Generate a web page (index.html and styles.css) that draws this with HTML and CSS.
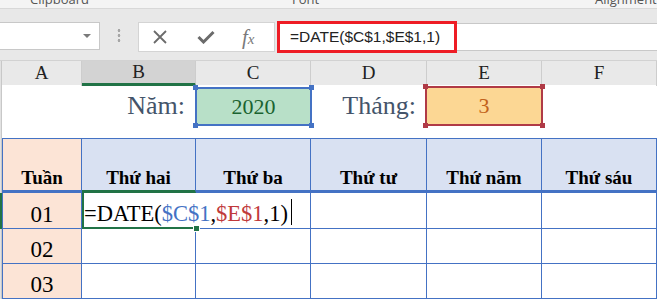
FILE: index.html
```html
<!DOCTYPE html>
<html lang="vi">
<head>
    <meta charset="UTF-8">
    <title>DATE</title>
    <link rel="stylesheet" href="styles.css">
</head>
<body>
    <div class="ribbon">
        <span class="rlabel">Clipboard</span>
        <span class="rlabel">Font</span>
        <span class="rlabel">Alignment</span>
    </div>

    <div class="fbar">
        <div class="namebox"><span class="caret"></span></div>
        <div class="grip"></div>
        <div class="fbtns">
            <svg class="ico-x" width="14" height="14" viewBox="0 0 14 14">
                <path d="M1 1L13 13M13 1L1 13" stroke="#6b6b6b" stroke-width="1.8" fill="none"/>
            </svg>
            <svg class="ico-ok" width="18" height="14" viewBox="0 0 18 14">
                <path d="M1.5 7L6.5 12L16.5 2" stroke="#6b6b6b" stroke-width="3" fill="none"/>
            </svg>
            <span class="ico-fx">f<small>x</small></span>
        </div>
        <div class="finput">
            <span class="fhl">=DATE($C$1,$E$1,1)</span>
        </div>
    </div>

    <div class="cols">
        <div class="ch gut"></div>
        <div class="ch">A</div>
        <div class="ch sel">B</div>
        <div class="ch">C</div>
        <div class="ch">D</div>
        <div class="ch">E</div>
        <div class="ch">F</div>
    </div>

    <div class="row r1">
        <div class="gut"></div>
        <div></div>
        <div class="lbl">Năm:</div>
        <div><div class="hl hl-c">2020<i class="tl"></i><i class="tr"></i><i class="bl"></i><i class="br"></i></div></div>
        <div class="lbl">Tháng:</div>
        <div><div class="hl hl-e">3<i class="tl"></i><i class="tr"></i><i class="bl"></i><i class="br"></i></div></div>
        <div></div>
    </div>

    <div class="row r2">
        <div class="gut"></div>
        <div class="th wk">Tuần</div>
        <div class="th sel">Thứ hai</div>
        <div class="th">Thứ ba</div>
        <div class="th">Thứ tư</div>
        <div class="th">Thứ năm</div>
        <div class="th">Thứ sáu</div>
    </div>

    <div class="row rd">
        <div class="gut on"></div>
        <div class="td wk">01</div>
        <div class="td edit">
            <span class="ftext">=DATE(<span class="ref-c">$C$1</span>,<span class="ref-e">$E$1</span>,1)<span class="cursor"></span></span>
            <span class="handle"></span>
        </div>
        <div class="td"></div>
        <div class="td"></div>
        <div class="td"></div>
        <div class="td"></div>
    </div>

    <div class="row rd">
        <div class="gut"></div>
        <div class="td wk">02</div>
        <div class="td"></div>
        <div class="td"></div>
        <div class="td"></div>
        <div class="td"></div>
        <div class="td"></div>
    </div>

    <div class="row rd">
        <div class="gut"></div>
        <div class="td wk">03</div>
        <div class="td"></div>
        <div class="td"></div>
        <div class="td"></div>
        <div class="td"></div>
        <div class="td"></div>
    </div>
</body>
</html>
```

FILE: styles.css
```css
body {
    margin: 0;
    width: 657px;
    height: 302px;
    overflow: hidden;
    background: #fff;
    font-family: "Liberation Serif", serif;
}

/* ribbon group labels, cut off at the top */
.ribbon {
    height: 8px;
    background: #f4f4f4;
    border-bottom: 1px solid #d8d8d8;
    overflow: hidden;
    display: grid;
    grid-template-columns: 30px 262px 303px auto;
    font-family: "Open Sans", sans-serif;
    font-size: 13px;
    line-height: 13px;
    color: #555;
}
.rlabel {
    margin-top: -7px;
}
.rlabel:nth-child(1) { grid-column: 2; }
.rlabel:nth-child(2) { grid-column: 3; }
.rlabel:nth-child(3) { grid-column: 4; }

/* formula bar */
.fbar {
    height: 52px;
    box-sizing: border-box;
    padding-top: 13px;
    background: #e8e8e8;
    border-bottom: 1px solid #d2d2d2;
    display: flex;
    align-items: flex-start;
}
.namebox {
    width: 100px;
    height: 28px;
    box-sizing: border-box;
    background: #fff;
    border: 1px solid #c8c8c8;
    border-left: none;
    display: flex;
    justify-content: flex-end;
    align-items: center;
    padding-right: 8px;
}
.caret {
    width: 0;
    height: 0;
    border-left: 4px solid transparent;
    border-right: 4px solid transparent;
    border-top: 4px solid #7a7a7a;
}
.grip {
    width: 4px;
    height: 15px;
    margin: 6px 0 0 17px;
    background: radial-gradient(circle, #a6a6a6 1.2px, transparent 1.6px) 0 0 / 4px 5px;
}
.fbtns {
    width: 137px;
    height: 30px;
    box-sizing: border-box;
    margin-left: 17px;
    background: #fff;
    border: 1px solid #d4d4d4;
    display: flex;
    align-items: center;
}
.ico-x { margin-left: 14px; }
.ico-ok { margin-left: 30px; }
.ico-fx {
    margin-left: 27px;
    font-family: "Liberation Serif", serif;
    font-style: italic;
    font-size: 21px;
    color: #7a7a7a;
}
.ico-fx small {
    font-size: 15px;
}
.finput {
    flex: 1;
    height: 28px;
    margin: 1px 0 0 2px;
    box-sizing: border-box;
    background: #fff;
    border-top: 1px solid #c8c8c8;
    border-bottom: 1px solid #c8c8c8;
    display: flex;
    align-items: center;
}
.fhl {
    width: 180px;
    height: 32px;
    flex-shrink: 0;
    box-sizing: border-box;
    border: 3px solid #ee1c25;
    padding-left: 10px;
    display: flex;
    align-items: center;
    font-family: "Liberation Sans", sans-serif;
    font-size: 15.5px;
    color: #222;
}

/* sheet grid */
.cols,
.row {
    display: grid;
    grid-template-columns: 2px 80px 114px 115px 116px 115px 115px;
}
.cols {
    height: 24px;
    background: #e9e9e9;
}
.ch {
    box-sizing: border-box;
    border-right: 1px solid #cdcdcd;
    text-align: center;
    font-size: 19px;
    line-height: 24px;
    color: #222;
}
.ch.gut {
    background: #e2e2e2;
}
.ch.sel {
    background: #d3d3d3;
    border-bottom: 3px solid #217346;
    line-height: 22px;
}
.gut {
    background: #e2e2e2;
    border-right: 1px solid #c8c8c8;
    box-sizing: border-box;
}
.gut.on {
    background: #217346;
    border-right: none;
}

/* row 1: year / month inputs */
.r1 {
    height: 53px;
}
.lbl {
    height: 41px;
    box-sizing: border-box;
    padding-right: 11px;
    display: flex;
    justify-content: flex-end;
    align-items: center;
    font-size: 26px;
    color: #44546a;
}
.hl {
    position: relative;
    height: 39px;
    box-sizing: border-box;
    margin: 2px -1px 0 -1px;
    border: 2px solid;
    display: flex;
    justify-content: center;
    align-items: center;
    font-size: 22px;
}
.hl-c {
    background: #b8e0c8;
    border-color: #4472c4;
    color: #1a6330;
}
.hl-e {
    margin: 1px -1px 0 -2px;
    height: 40px;
    background: #fcd794;
    border-color: #b03a46;
    color: #c2621b;
}
.hl i {
    position: absolute;
    width: 5px;
    height: 5px;
}
.hl-c i { background: #4472c4; }
.hl-e i { background: #b03a46; }
.hl .tl { top: -4px; left: -4px; }
.hl .tr { top: -4px; right: -4px; }
.hl .bl { bottom: -4px; left: -4px; }
.hl .br { bottom: -4px; right: -4px; }

/* table header */
.r2 > div {
    height: 55px;
}
.th {
    box-sizing: border-box;
    background: #d9e1f2;
    border-top: 1px solid #4472c4;
    border-right: 1px solid #4472c4;
    border-bottom: 3px solid #4472c4;
    display: flex;
    justify-content: center;
    align-items: flex-end;
    padding-bottom: 3px;
    font-size: 19px;
    font-weight: bold;
    line-height: 19px;
    color: #000;
}
.th.wk {
    background: #fce4d6;
    border-left: 1px solid #4472c4;
}
.th.sel {
    border-bottom-color: #217346;
}

/* data rows */
.rd > div {
    height: 36px;
}
.rd + .rd > div {
    height: 35px;
}
.td {
    position: relative;
    box-sizing: border-box;
    border-right: 1px solid #4472c4;
    border-bottom: 1px solid #4472c4;
    display: flex;
    justify-content: center;
    align-items: flex-end;
    font-size: 23px;
    color: #000;
}
.td.wk {
    background: #fce4d6;
    border-left: 1px solid #4472c4;
}
.td.edit {
    justify-content: flex-start;
    border-left: 2px solid #217346;
    border-bottom: 2px solid #217346;
    border-right: none;
    font-size: 22.5px;
}
.ftext {
    position: relative;
    z-index: 1;
    height: 34px;
    padding-right: 2px;
    background: #fff;
    display: flex;
    align-items: flex-end;
    white-space: nowrap;
}
.ref-c { color: #4472c4; }
.ref-e { color: #c0393b; }
.cursor {
    display: inline-block;
    width: 1px;
    height: 26px;
    margin: 0 0 2px 3px;
    background: #000;
}
.handle {
    position: absolute;
    z-index: 2;
    right: -4px;
    bottom: -5px;
    width: 5px;
    height: 5px;
    background: #217346;
    border: 1px solid #fff;
}
```
